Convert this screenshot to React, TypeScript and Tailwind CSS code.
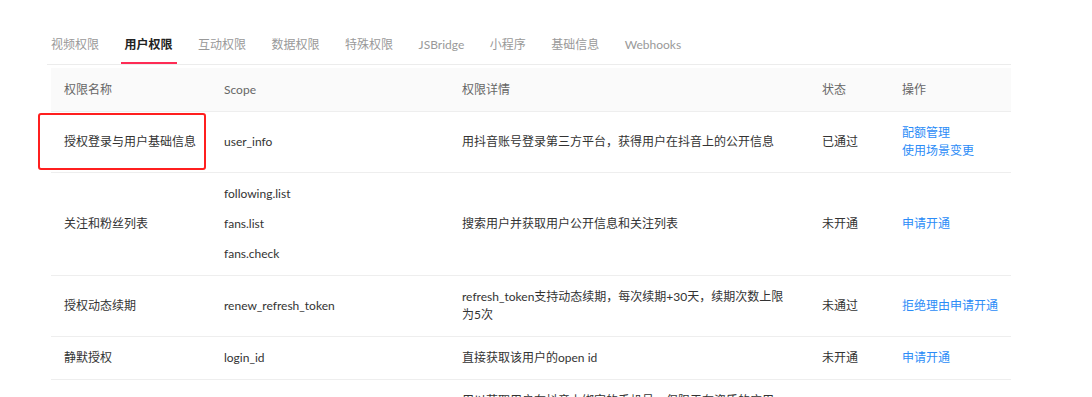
import React from 'react';

const tabs = ['视频权限', '用户权限', '互动权限', '数据权限', '特殊权限', 'JSBridge', '小程序', '基础信息', 'Webhooks'];

type Row = {
  name: string;
  scopes: string[];
  detail: string;
  status: string;
  actions: string[];
  height: string;
};

const rows: Row[] = [
  {
    name: '授权登录与用户基础信息',
    scopes: ['user_info'],
    detail: '用抖音账号登录第三方平台，获得用户在抖音上的公开信息',
    status: '已通过',
    actions: ['配额管理', '使用场景变更'],
    height: 'h-[61px]',
  },
  {
    name: '关注和粉丝列表',
    scopes: ['following.list', 'fans.list', 'fans.check'],
    detail: '搜索用户并获取用户公开信息和关注列表',
    status: '未开通',
    actions: ['申请开通'],
    height: 'h-[103px]',
  },
  {
    name: '授权动态续期',
    scopes: ['renew_refresh_token'],
    detail: 'refresh_token支持动态续期，每次续期+30天，续期次数上限为5次',
    status: '未通过',
    actions: ['拒绝理由申请开通'],
    height: 'h-[61px]',
  },
  {
    name: '静默授权',
    scopes: ['login_id'],
    detail: '直接获取该用户的open id',
    status: '未开通',
    actions: ['申请开通'],
    height: 'h-[43px]',
  },
  {
    name: '手机号授权',
    scopes: ['mobile'],
    detail: '用以获取用户在抖音上绑定的手机号，仅限于有资质的应用申请使用，需用户同意授权后方可获取相关信息，请遵守平台规范',
    status: '未开通',
    actions: ['申请开通'],
    height: 'h-[79px]',
  },
];

const App = () => {
  return (
    <div className="min-h-[397px] bg-white pt-[28px] font-['Lato','Noto_Sans_CJK_SC',sans-serif] text-[12px]">
      <div className="ml-[51px] w-[960px]">
        <div className="flex gap-[17.5px] -ml-[4px] border-b border-[#ececec] h-[37px]">
          {tabs.map((tab, i) => (
            <div
              key={tab}
              className={
                i === 1
                  ? 'px-[4px] pt-[8px] leading-[18px] h-[36px] border-b-2 border-[#fe2c55] font-bold text-[#222]'
                  : 'px-[4px] pt-[8px] leading-[18px] h-[36px] text-[#999]'
              }
            >
              {tab}
            </div>
          ))}
        </div>

        <div className="relative mt-[3px]">
          <div className="flex h-[44px] items-center bg-[#fafafa] border-b border-[#eeeeee] text-[#666]">
            <div className="w-[160px] pl-[13px]">权限名称</div>
            <div className="w-[239px] pl-[13px]">Scope</div>
            <div className="w-[359px] pl-[12px]">权限详情</div>
            <div className="w-[80px] pl-[13px]">状态</div>
            <div className="w-[122px] pl-[13px]">操作</div>
          </div>

          {rows.map((row) => (
            <div key={row.name} className={`flex items-center border-b border-[#eeeeee] text-[#333] ${row.height}`}>
              <div className="w-[160px] pl-[13px]">{row.name}</div>
              <div className="w-[239px] pl-[13px] leading-[30px]">
                {row.scopes.map((s) => (
                  <div key={s}>{s}</div>
                ))}
              </div>
              <div className="w-[359px] pl-[12px] leading-[18px]">
                <div className="max-w-[322px]">{row.detail}</div>
              </div>
              <div className="w-[80px] pl-[13px]">{row.status}</div>
              <div className="w-[122px] pl-[13px] leading-[18px] text-[#2b8cf7]">
                {row.actions.map((a) => (
                  <div key={a}>{a}</div>
                ))}
              </div>
            </div>
          ))}

          <div className="absolute left-[-13px] top-[45px] w-[168px] h-[57px] border-2 border-[#ff1f1f] rounded-[3px]" />
        </div>
      </div>
    </div>
  );
};

export default App;
